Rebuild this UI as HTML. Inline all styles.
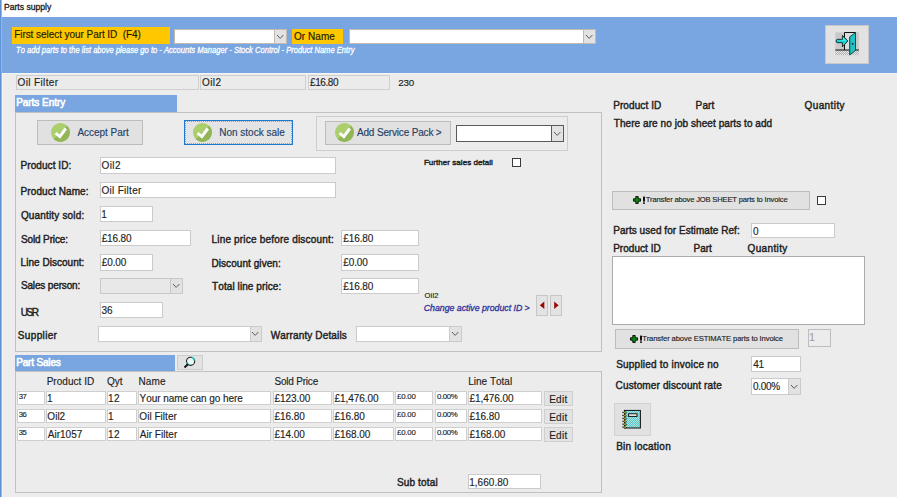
<!DOCTYPE html>
<html><head><meta charset="utf-8"><style>
html,body{margin:0;padding:0;}
body{width:897px;height:497px;overflow:hidden;position:relative;background:#ececec;font-family:'Liberation Sans', sans-serif;}
.a{position:absolute;box-sizing:border-box;}
.t{position:absolute;white-space:nowrap;font-kerning:none;-webkit-text-stroke:0.15px currentColor;}
</style></head><body>
<div class="a" style="left:0px;top:0px;width:897px;height:17px;background:#ffffff;"></div>
<div class="t" style="left:4.00px;top:2.97px;font-size:8.6px;line-height:8.6px;color:#1a1a1a;-webkit-text-stroke:0.3px #1a1a1a;">Parts supply</div>
<div class="a" style="left:0px;top:17px;width:897px;height:56px;background:#79a6e0;"></div>
<div class="a" style="left:0px;top:73px;width:897px;height:1px;background:#f4f4f4;"></div>
<div class="a" style="left:12px;top:27px;width:158px;height:17px;background:#ffc700;"></div>
<div class="t" style="left:14.18px;top:29.65px;font-size:10.01px;line-height:10.01px;color:#201a00;letter-spacing:-0.055px;">First select your Part ID&nbsp; (F4)</div>
<div class="a" style="left:174px;top:29px;width:113px;height:15px;background:#fff;border:1px solid #c2bbb4;"></div>
<div class="a" style="left:274px;top:29px;width:13px;height:15px;background:#e2e2e2;border:1px solid #c2bbb4;"></div>
<svg class="a" style="left:275.7px;top:33.8px" width="8.4" height="5.4"><polyline points="1,1 4.2,4.4 7.4,1" fill="none" stroke="#5c5c5c" stroke-width="1"/></svg>
<div class="a" style="left:292px;top:29px;width:51px;height:15px;background:#ffc700;"></div>
<div class="t" style="left:294.03px;top:31.85px;font-size:10.01px;line-height:10.01px;color:#201a00;letter-spacing:0.053px;">Or Name</div>
<div class="a" style="left:349px;top:29px;width:247px;height:15px;background:#fff;border:1px solid #c2bbb4;"></div>
<div class="a" style="left:583px;top:29px;width:13px;height:15px;background:#e2e2e2;border:1px solid #c2bbb4;"></div>
<svg class="a" style="left:584.6999999999999px;top:33.8px" width="8.4" height="5.4"><polyline points="1,1 4.2,4.4 7.4,1" fill="none" stroke="#5c5c5c" stroke-width="1"/></svg>
<div class="t" style="left:16.00px;top:45.94px;font-size:8.8px;line-height:8.8px;color:#ffffff;font-style:italic;transform:scaleX(0.862);transform-origin:0 0;-webkit-text-stroke:0.3px #fff;">To add parts to the list above please go to - Accounts Manager - Stock Control - Product Name Entry</div>
<div class="a" style="left:825px;top:25px;width:44px;height:39px;background:#e2e2e2;border:1px solid #c8c8c8;"></div>
<svg class="a" style="left:833px;top:30px" width="28" height="28" viewBox="0 0 28 28">
<defs><pattern id="htch" width="2" height="2" patternUnits="userSpaceOnUse"><rect width="2" height="2" fill="#e6e6e6"/><rect width="1" height="1" fill="#b0b0b0"/><rect x="1" y="1" width="1" height="1" fill="#b0b0b0"/></pattern></defs>
<rect x="2.3" y="2.3" width="23.6" height="17.7" fill="#c9c9c9"/>
<rect x="11.5" y="2.5" width="11" height="17.5" fill="#dcdcdc"/>
<rect x="2.3" y="20" width="23.6" height="5.2" fill="url(#htch)"/>
<path d="M11.5 20 V2.5 H22.5" fill="none" stroke="#111" stroke-width="1"/>
<line x1="2.3" y1="20" x2="25.9" y2="20" stroke="#111" stroke-width="1"/>
<path d="M16.5 7 L22.5 2.5 L22.5 20.5 L16.5 25 Z" fill="#1fc4c4" stroke="#0a3a3a" stroke-width="0.9"/>
<path d="M16.5 7 L17.6 6.2 L17.6 24.2 L16.5 25 Z" fill="#0e8f8f"/>
<circle cx="19.7" cy="13.8" r="0.9" fill="#113"/>
<path d="M4.8 9.3 H9.4 V5.4 L14.9 11 L9.4 16.9 V12.7 H4.8 A1.7 1.7 0 0 1 4.8 9.3 Z" fill="#12d6d6" stroke="#102020" stroke-width="0.9"/>
<path d="M5 10 H10 V7.5 L13 11 Z" fill="#7ff0f0" opacity="0.7"/>
</svg>
<div class="a" style="left:16px;top:75px;width:183px;height:15px;background:#ebebeb;border:1px solid #cfcfcf;"></div>
<div class="t" style="left:17.53px;top:78.05px;font-size:10px;line-height:10px;color:#1e1e1e;letter-spacing:0.369px;">Oil Filter</div>
<div class="a" style="left:200px;top:75px;width:106px;height:15px;background:#ebebeb;border:1px solid #cfcfcf;"></div>
<div class="t" style="left:202.03px;top:78.05px;font-size:10px;line-height:10px;color:#1e1e1e;letter-spacing:0.398px;">Oil2</div>
<div class="a" style="left:308px;top:75px;width:82px;height:15px;background:#ebebeb;border:1px solid #cfcfcf;"></div>
<div class="t" style="left:310.02px;top:78.05px;font-size:10px;line-height:10px;color:#1e1e1e;letter-spacing:-0.402px;">£16.80</div>
<div class="t" style="left:398.31px;top:77.68px;font-size:9.8px;line-height:9.8px;color:#1e1e1e;letter-spacing:-0.238px;">230</div>
<div class="a" style="left:15px;top:112px;width:587px;height:240px;border:1px solid #c0c0c0;"></div>
<div class="a" style="left:15px;top:95px;width:162px;height:17px;background:#79a6e0;"></div>
<div class="t" style="left:16.18px;top:98.25px;font-size:10.01px;line-height:10.01px;color:#ffffff;letter-spacing:-0.047px;-webkit-text-stroke:0.6px #fff;">Parts Entry</div>
<div class="a" style="left:37px;top:120px;width:106px;height:25px;background:#e1e1e1;border:1px solid #bdbdbd;"></div>
<svg class="a" style="left:50.9px;top:123.19999999999999px" width="19.0" height="19.0" viewBox="0 0 20 20">
<circle cx="10" cy="10" r="10" fill="#aacf6c"/>
<path d="M17.07 2.93 A10 10 0 0 1 2.93 17.07 Z" fill="#92b556"/>
<polyline points="4.8,10.6 9.3,14.2 15.6,5.8" fill="none" stroke="#fafafa" stroke-width="3.2"/>
</svg>
<div class="t" style="left:77.48px;top:128.35px;font-size:10.01px;line-height:10.01px;color:#253f66;letter-spacing:-0.045px;">Accept Part</div>
<div class="a" style="left:184px;top:120px;width:109px;height:25px;background:#e4e4e4;border:1px solid #1f78d0;"></div>
<div class="a" style="left:185px;top:121px;width:107px;height:23px;border:1px dotted #c89a6a;"></div>
<svg class="a" style="left:193.0px;top:123.19999999999999px" width="19.0" height="19.0" viewBox="0 0 20 20">
<circle cx="10" cy="10" r="10" fill="#aacf6c"/>
<path d="M17.07 2.93 A10 10 0 0 1 2.93 17.07 Z" fill="#92b556"/>
<polyline points="4.8,10.6 9.3,14.2 15.6,5.8" fill="none" stroke="#fafafa" stroke-width="3.2"/>
</svg>
<div class="t" style="left:219.18px;top:128.35px;font-size:10.01px;line-height:10.01px;color:#253f66;letter-spacing:0.001px;">Non stock sale</div>
<div class="a" style="left:316px;top:116px;width:252px;height:35px;border:1px solid #cdcdcd;"></div>
<div class="a" style="left:325px;top:121px;width:126px;height:24px;background:#e1e1e1;border:1px solid #bdbdbd;"></div>
<svg class="a" style="left:334.8px;top:123.19999999999999px" width="19.0" height="19.0" viewBox="0 0 20 20">
<circle cx="10" cy="10" r="10" fill="#aacf6c"/>
<path d="M17.07 2.93 A10 10 0 0 1 2.93 17.07 Z" fill="#92b556"/>
<polyline points="4.8,10.6 9.3,14.2 15.6,5.8" fill="none" stroke="#fafafa" stroke-width="3.2"/>
</svg>
<div class="t" style="left:356.98px;top:128.35px;font-size:10.01px;line-height:10.01px;color:#253f66;letter-spacing:-0.166px;">Add Service Pack &gt;</div>
<div class="a" style="left:456px;top:125px;width:108px;height:17px;background:#fff;border:1px solid #5a5a5a;"></div>
<div class="a" style="left:551px;top:125px;width:13px;height:17px;background:#e2e2e2;border:1px solid #5a5a5a;"></div>
<svg class="a" style="left:552.6999999999999px;top:130.8px" width="8.4" height="5.4"><polyline points="1,1 4.2,4.4 7.4,1" fill="none" stroke="#5c5c5c" stroke-width="1"/></svg>
<div class="t" style="left:423.94px;top:159.16px;font-size:8px;line-height:8px;color:#1e1e1e;letter-spacing:0.045px;-webkit-text-stroke:0.42px currentColor;">Further sales detail</div>
<div class="a" style="left:512px;top:158px;width:9px;height:9px;background:#fff;border:1px solid #3a3a3a;"></div>
<div class="t" style="left:20.58px;top:161.05px;font-size:10.01px;line-height:10.01px;color:#1e1e1e;letter-spacing:0.067px;-webkit-text-stroke:0.42px currentColor;">Product ID:</div>
<div class="a" style="left:100px;top:157px;width:236px;height:17px;background:#fff;border:1px solid #cbcbcb;"></div>
<div class="t" style="left:101.53px;top:161.25px;font-size:10.01px;line-height:10.01px;color:#1e1e1e;letter-spacing:0.426px;">Oil2</div>
<div class="t" style="left:20.58px;top:187.35px;font-size:10.01px;line-height:10.01px;color:#1e1e1e;letter-spacing:0.105px;-webkit-text-stroke:0.42px currentColor;">Product Name:</div>
<div class="a" style="left:100px;top:182px;width:236px;height:16px;background:#fff;border:1px solid #cbcbcb;"></div>
<div class="t" style="left:101.53px;top:186.25px;font-size:10.01px;line-height:10.01px;color:#1e1e1e;letter-spacing:0.287px;">Oil Filter</div>
<div class="t" style="left:20.93px;top:210.75px;font-size:10.01px;line-height:10.01px;color:#1e1e1e;letter-spacing:0.162px;-webkit-text-stroke:0.42px currentColor;">Quantity sold:</div>
<div class="a" style="left:100px;top:206px;width:53px;height:16px;background:#fff;border:1px solid #cbcbcb;"></div>
<div class="t" style="left:101.24px;top:210.25px;font-size:10.01px;line-height:10.01px;color:#1e1e1e;letter-spacing:0px;">1</div>
<div class="t" style="left:20.95px;top:234.75px;font-size:10.01px;line-height:10.01px;color:#1e1e1e;letter-spacing:-0.128px;-webkit-text-stroke:0.42px currentColor;">Sold Price:</div>
<div class="a" style="left:100px;top:230px;width:91px;height:16px;background:#fff;border:1px solid #cbcbcb;"></div>
<div class="t" style="left:101.72px;top:234.25px;font-size:10.01px;line-height:10.01px;color:#1e1e1e;letter-spacing:-0.168px;">£16.80</div>
<div class="t" style="left:211.48px;top:234.75px;font-size:10.01px;line-height:10.01px;color:#1e1e1e;letter-spacing:0.189px;-webkit-text-stroke:0.42px currentColor;">Line price before discount:</div>
<div class="a" style="left:341px;top:230px;width:78px;height:16px;background:#fff;border:1px solid #cbcbcb;"></div>
<div class="t" style="left:343.22px;top:234.25px;font-size:10.01px;line-height:10.01px;color:#1e1e1e;letter-spacing:-0.077px;">£16.80</div>
<div class="t" style="left:20.58px;top:257.85px;font-size:10.01px;line-height:10.01px;color:#1e1e1e;letter-spacing:0.031px;-webkit-text-stroke:0.42px currentColor;">Line Discount:</div>
<div class="a" style="left:100px;top:254px;width:53px;height:17px;background:#fff;border:1px solid #cbcbcb;"></div>
<div class="t" style="left:101.72px;top:258.25px;font-size:10.01px;line-height:10.01px;color:#1e1e1e;letter-spacing:-0.098px;">£0.00</div>
<div class="t" style="left:211.48px;top:258.75px;font-size:10.01px;line-height:10.01px;color:#1e1e1e;letter-spacing:0.066px;-webkit-text-stroke:0.42px currentColor;">Discount given:</div>
<div class="a" style="left:341px;top:254px;width:78px;height:17px;background:#fff;border:1px solid #cbcbcb;"></div>
<div class="t" style="left:343.22px;top:258.25px;font-size:10.01px;line-height:10.01px;color:#1e1e1e;letter-spacing:-0.098px;">£0.00</div>
<div class="t" style="left:20.95px;top:281.25px;font-size:10.01px;line-height:10.01px;color:#1e1e1e;letter-spacing:-0.152px;-webkit-text-stroke:0.42px currentColor;">Sales person:</div>
<div class="a" style="left:100px;top:278px;width:83px;height:16px;background:#e8e8e8;border:1px solid #c8c8c8;"></div>
<div class="a" style="left:170px;top:278px;width:13px;height:16px;background:#e2e2e2;border:1px solid #c8c8c8;"></div>
<svg class="a" style="left:171.70000000000002px;top:283.3px" width="8.4" height="5.4"><polyline points="1,1 4.2,4.4 7.4,1" fill="none" stroke="#5c5c5c" stroke-width="1"/></svg>
<div class="t" style="left:212.08px;top:282.25px;font-size:10.01px;line-height:10.01px;color:#1e1e1e;letter-spacing:0.085px;-webkit-text-stroke:0.42px currentColor;">Total line price:</div>
<div class="a" style="left:341px;top:278px;width:78px;height:16px;background:#fff;border:1px solid #cbcbcb;"></div>
<div class="t" style="left:343.22px;top:282.25px;font-size:10.01px;line-height:10.01px;color:#1e1e1e;letter-spacing:-0.077px;">£16.80</div>
<div class="t" style="left:424.44px;top:292.02px;font-size:7.6px;line-height:7.6px;color:#1e1e1e;letter-spacing:0.209px;">Oil2</div>
<div class="t" style="left:423.81px;top:304.24px;font-size:8.8px;line-height:8.8px;color:#30309a;font-style:italic;letter-spacing:-0.036px;-webkit-text-stroke:0.3px #30309a;">Change active product ID &gt;</div>
<div class="a" style="left:536px;top:295px;width:12px;height:21px;background:#e3e3e3;border:1px solid #c6c6c6;"></div>
<div class="a" style="left:550px;top:295px;width:12px;height:21px;background:#e3e3e3;border:1px solid #c6c6c6;"></div>
<svg class="a" style="left:536px;top:295px" width="26" height="20"><polygon points="8.3,6.6 8.3,14 3.8,10.3" fill="#980808"/><polygon points="18.2,6.6 18.2,14 22.6,10.3" fill="#980808"/></svg>
<div class="t" style="left:20.63px;top:307.55px;font-size:10.01px;line-height:10.01px;color:#1e1e1e;letter-spacing:-1.407px;-webkit-text-stroke:0.42px currentColor;">USR</div>
<div class="a" style="left:100px;top:302px;width:63px;height:16px;background:#fff;border:1px solid #cbcbcb;"></div>
<div class="t" style="left:101.62px;top:306.25px;font-size:10.01px;line-height:10.01px;color:#1e1e1e;letter-spacing:-0.159px;">36</div>
<div class="t" style="left:17.85px;top:331.25px;font-size:10.01px;line-height:10.01px;color:#1e1e1e;letter-spacing:0.342px;-webkit-text-stroke:0.42px currentColor;">Supplier</div>
<div class="a" style="left:98px;top:326px;width:164px;height:16px;background:#fff;border:1px solid #cbcbcb;"></div>
<div class="a" style="left:250px;top:326px;width:12px;height:16px;background:#e2e2e2;border:1px solid #cbcbcb;"></div>
<svg class="a" style="left:251.20000000000002px;top:331.3px" width="8.4" height="5.4"><polyline points="1,1 4.2,4.4 7.4,1" fill="none" stroke="#5c5c5c" stroke-width="1"/></svg>
<div class="t" style="left:270.76px;top:330.75px;font-size:10.01px;line-height:10.01px;color:#1e1e1e;letter-spacing:0.142px;-webkit-text-stroke:0.42px currentColor;">Warranty Details</div>
<div class="a" style="left:356px;top:326px;width:106px;height:16px;background:#fff;border:1px solid #cbcbcb;"></div>
<div class="a" style="left:449px;top:326px;width:13px;height:16px;background:#e2e2e2;border:1px solid #cbcbcb;"></div>
<svg class="a" style="left:450.7px;top:331.3px" width="8.4" height="5.4"><polyline points="1,1 4.2,4.4 7.4,1" fill="none" stroke="#5c5c5c" stroke-width="1"/></svg>
<div class="a" style="left:15px;top:371px;width:587px;height:122px;border:1px solid #c0c0c0;"></div>
<div class="a" style="left:15px;top:355px;width:160px;height:16px;background:#79a6e0;"></div>
<div class="t" style="left:16.18px;top:358.25px;font-size:10.01px;line-height:10.01px;color:#ffffff;letter-spacing:-0.166px;-webkit-text-stroke:0.6px #fff;">Part Sales</div>
<div class="a" style="left:177px;top:355px;width:26px;height:15px;background:#e2e2e2;border:1px solid #cccccc;"></div>
<svg class="a" style="left:182px;top:356px" width="16" height="14"><circle cx="8.6" cy="5.3" r="4.1" fill="#eef6f6" stroke="#222" stroke-width="1.1"/><path d="M9.8 1.6 A3.6 3.6 0 0 1 12.2 4.6" fill="none" stroke="#20d8c8" stroke-width="1.6"/><path d="M5 6.2 A3.6 3.6 0 0 0 7 8.8" fill="none" stroke="#20d8c8" stroke-width="1.4"/><line x1="6.2" y1="8.1" x2="2.5" y2="11.6" stroke="#111" stroke-width="2"/></svg>
<div class="t" style="left:46.68px;top:377.35px;font-size:10.01px;line-height:10.01px;color:#1e1e1e;letter-spacing:0.027px;">Product ID</div>
<div class="t" style="left:107.03px;top:377.35px;font-size:10.01px;line-height:10.01px;color:#1e1e1e;letter-spacing:0.023px;">Qyt</div>
<div class="t" style="left:138.58px;top:377.35px;font-size:10.01px;line-height:10.01px;color:#1e1e1e;letter-spacing:0.069px;">Name</div>
<div class="t" style="left:274.55px;top:377.35px;font-size:10.01px;line-height:10.01px;color:#1e1e1e;letter-spacing:-0.213px;">Sold Price</div>
<div class="t" style="left:468.18px;top:377.35px;font-size:10.01px;line-height:10.01px;color:#1e1e1e;letter-spacing:0.004px;">Line Total</div>
<div class="a" style="left:17px;top:391px;width:28px;height:14px;background:#fff;border:1px solid #cfcfcf;"></div>
<div class="t" style="left:18.71px;top:392.61px;font-size:7.7px;line-height:7.7px;color:#1e1e1e;letter-spacing:-0.367px;">37</div>
<div class="a" style="left:46px;top:391px;width:60px;height:14px;background:#fff;border:1px solid #cfcfcf;"></div>
<div class="t" style="left:47.04px;top:394.45px;font-size:10.01px;line-height:10.01px;color:#1e1e1e;letter-spacing:0px;">1</div>
<div class="a" style="left:107px;top:391px;width:30px;height:14px;background:#fff;border:1px solid #cfcfcf;"></div>
<div class="t" style="left:108.04px;top:394.45px;font-size:10.01px;line-height:10.01px;color:#1e1e1e;letter-spacing:0.286px;">12</div>
<div class="a" style="left:138px;top:391px;width:133px;height:14px;background:#fff;border:1px solid #cfcfcf;"></div>
<div class="t" style="left:139.58px;top:394.45px;font-size:10.01px;line-height:10.01px;color:#1e1e1e;letter-spacing:-0.068px;">Your name can go here</div>
<div class="a" style="left:273px;top:391px;width:59px;height:14px;background:#fff;border:1px solid #cfcfcf;"></div>
<div class="t" style="left:274.52px;top:394.45px;font-size:10.01px;line-height:10.01px;color:#1e1e1e;letter-spacing:-0.062px;">£123.00</div>
<div class="a" style="left:333px;top:391px;width:61px;height:14px;background:#fff;border:1px solid #cfcfcf;"></div>
<div class="t" style="left:334.52px;top:394.45px;font-size:10.01px;line-height:10.01px;color:#1e1e1e;letter-spacing:-0.049px;">£1,476.00</div>
<div class="a" style="left:395px;top:391px;width:38px;height:14px;background:#fff;border:1px solid #cfcfcf;"></div>
<div class="t" style="left:396.98px;top:392.99px;font-size:7.8px;line-height:7.8px;color:#1e1e1e;letter-spacing:-0.172px;">£0.00</div>
<div class="a" style="left:435px;top:391px;width:32px;height:14px;background:#fff;border:1px solid #cfcfcf;"></div>
<div class="t" style="left:436.90px;top:392.99px;font-size:7.8px;line-height:7.8px;color:#1e1e1e;letter-spacing:-0.346px;">0.00%</div>
<div class="a" style="left:468px;top:391px;width:74px;height:14px;background:#fff;border:1px solid #cfcfcf;"></div>
<div class="t" style="left:469.52px;top:394.45px;font-size:10.01px;line-height:10.01px;color:#1e1e1e;letter-spacing:-0.049px;">£1,476.00</div>
<div class="a" style="left:544px;top:391px;width:29px;height:14.5px;background:#e3e3e3;border:1px solid #cfcfcf;"></div>
<div class="t" style="left:549.18px;top:394.55px;font-size:10.01px;line-height:10.01px;color:#1e1e1e;letter-spacing:0.282px;">Edit</div>
<div class="a" style="left:17px;top:409px;width:28px;height:14px;background:#fff;border:1px solid #cfcfcf;"></div>
<div class="t" style="left:18.71px;top:410.61px;font-size:7.7px;line-height:7.7px;color:#1e1e1e;letter-spacing:-0.416px;">36</div>
<div class="a" style="left:46px;top:409px;width:60px;height:14px;background:#fff;border:1px solid #cfcfcf;"></div>
<div class="t" style="left:47.33px;top:412.45px;font-size:10.01px;line-height:10.01px;color:#1e1e1e;letter-spacing:0.025px;">Oil2</div>
<div class="a" style="left:107px;top:409px;width:30px;height:14px;background:#fff;border:1px solid #cfcfcf;"></div>
<div class="t" style="left:108.04px;top:412.45px;font-size:10.01px;line-height:10.01px;color:#1e1e1e;letter-spacing:0px;">1</div>
<div class="a" style="left:138px;top:409px;width:133px;height:14px;background:#fff;border:1px solid #cfcfcf;"></div>
<div class="t" style="left:139.33px;top:412.45px;font-size:10.01px;line-height:10.01px;color:#1e1e1e;letter-spacing:0.031px;">Oil Filter</div>
<div class="a" style="left:273px;top:409px;width:59px;height:14px;background:#fff;border:1px solid #cfcfcf;"></div>
<div class="t" style="left:274.52px;top:412.45px;font-size:10.01px;line-height:10.01px;color:#1e1e1e;letter-spacing:-0.077px;">£16.80</div>
<div class="a" style="left:333px;top:409px;width:61px;height:14px;background:#fff;border:1px solid #cfcfcf;"></div>
<div class="t" style="left:334.52px;top:412.45px;font-size:10.01px;line-height:10.01px;color:#1e1e1e;letter-spacing:-0.077px;">£16.80</div>
<div class="a" style="left:395px;top:409px;width:38px;height:14px;background:#fff;border:1px solid #cfcfcf;"></div>
<div class="t" style="left:396.98px;top:410.99px;font-size:7.8px;line-height:7.8px;color:#1e1e1e;letter-spacing:-0.172px;">£0.00</div>
<div class="a" style="left:435px;top:409px;width:32px;height:14px;background:#fff;border:1px solid #cfcfcf;"></div>
<div class="t" style="left:436.90px;top:410.99px;font-size:7.8px;line-height:7.8px;color:#1e1e1e;letter-spacing:-0.346px;">0.00%</div>
<div class="a" style="left:468px;top:409px;width:74px;height:14px;background:#fff;border:1px solid #cfcfcf;"></div>
<div class="t" style="left:469.52px;top:412.45px;font-size:10.01px;line-height:10.01px;color:#1e1e1e;letter-spacing:-0.077px;">£16.80</div>
<div class="a" style="left:544px;top:409px;width:29px;height:14.5px;background:#e3e3e3;border:1px solid #cfcfcf;"></div>
<div class="t" style="left:549.18px;top:412.55px;font-size:10.01px;line-height:10.01px;color:#1e1e1e;letter-spacing:0.282px;">Edit</div>
<div class="a" style="left:17px;top:427px;width:28px;height:14px;background:#fff;border:1px solid #cfcfcf;"></div>
<div class="t" style="left:18.71px;top:428.61px;font-size:7.7px;line-height:7.7px;color:#1e1e1e;letter-spacing:-0.431px;">35</div>
<div class="a" style="left:46px;top:427px;width:60px;height:14px;background:#fff;border:1px solid #cfcfcf;"></div>
<div class="t" style="left:47.78px;top:430.45px;font-size:10.01px;line-height:10.01px;color:#1e1e1e;letter-spacing:0.009px;">Air1057</div>
<div class="a" style="left:107px;top:427px;width:30px;height:14px;background:#fff;border:1px solid #cfcfcf;"></div>
<div class="t" style="left:108.04px;top:430.45px;font-size:10.01px;line-height:10.01px;color:#1e1e1e;letter-spacing:0.286px;">12</div>
<div class="a" style="left:138px;top:427px;width:133px;height:14px;background:#fff;border:1px solid #cfcfcf;"></div>
<div class="t" style="left:139.78px;top:430.45px;font-size:10.01px;line-height:10.01px;color:#1e1e1e;letter-spacing:0.025px;">Air Filter</div>
<div class="a" style="left:273px;top:427px;width:59px;height:14px;background:#fff;border:1px solid #cfcfcf;"></div>
<div class="t" style="left:274.52px;top:430.45px;font-size:10.01px;line-height:10.01px;color:#1e1e1e;letter-spacing:-0.077px;">£14.00</div>
<div class="a" style="left:333px;top:427px;width:61px;height:14px;background:#fff;border:1px solid #cfcfcf;"></div>
<div class="t" style="left:334.52px;top:430.45px;font-size:10.01px;line-height:10.01px;color:#1e1e1e;letter-spacing:-0.062px;">£168.00</div>
<div class="a" style="left:395px;top:427px;width:38px;height:14px;background:#fff;border:1px solid #cfcfcf;"></div>
<div class="t" style="left:396.98px;top:428.99px;font-size:7.8px;line-height:7.8px;color:#1e1e1e;letter-spacing:-0.172px;">£0.00</div>
<div class="a" style="left:435px;top:427px;width:32px;height:14px;background:#fff;border:1px solid #cfcfcf;"></div>
<div class="t" style="left:436.90px;top:428.99px;font-size:7.8px;line-height:7.8px;color:#1e1e1e;letter-spacing:-0.346px;">0.00%</div>
<div class="a" style="left:468px;top:427px;width:74px;height:14px;background:#fff;border:1px solid #cfcfcf;"></div>
<div class="t" style="left:469.52px;top:430.45px;font-size:10.01px;line-height:10.01px;color:#1e1e1e;letter-spacing:-0.062px;">£168.00</div>
<div class="a" style="left:544px;top:427px;width:29px;height:14.5px;background:#e3e3e3;border:1px solid #cfcfcf;"></div>
<div class="t" style="left:549.18px;top:430.55px;font-size:10.01px;line-height:10.01px;color:#1e1e1e;letter-spacing:0.282px;">Edit</div>
<div class="t" style="left:396.95px;top:478.05px;font-size:10.01px;line-height:10.01px;color:#1e1e1e;letter-spacing:0.152px;-webkit-text-stroke:0.42px currentColor;">Sub total</div>
<div class="a" style="left:468px;top:474px;width:73px;height:15px;background:#fff;border:1px solid #cbcbcb;"></div>
<div class="t" style="left:469.24px;top:478.25px;font-size:10.01px;line-height:10.01px;color:#1e1e1e;letter-spacing:0.025px;">1,660.80</div>
<div class="t" style="left:613.18px;top:100.95px;font-size:10.01px;line-height:10.01px;color:#1e1e1e;letter-spacing:0.09px;-webkit-text-stroke:0.42px currentColor;">Product ID</div>
<div class="t" style="left:695.58px;top:100.95px;font-size:10.01px;line-height:10.01px;color:#1e1e1e;letter-spacing:0.145px;-webkit-text-stroke:0.42px currentColor;">Part</div>
<div class="t" style="left:804.53px;top:100.95px;font-size:10.01px;line-height:10.01px;color:#1e1e1e;letter-spacing:0.402px;-webkit-text-stroke:0.42px currentColor;">Quantity</div>
<div class="t" style="left:613.78px;top:119.25px;font-size:10.01px;line-height:10.01px;color:#1e1e1e;letter-spacing:0.065px;-webkit-text-stroke:0.42px currentColor;">There are no job sheet parts to add</div>
<div class="a" style="left:612px;top:191px;width:198px;height:19px;background:#e1e1e1;border:1px solid #bdbdbd;"></div>
<svg class="a" style="left:632.5px;top:195.5px" width="13" height="8"><path d="M2.8 0.5h2.4v2.3h2.3v2.4H5.2v2.3H2.8V5.2H0.5V2.8h2.3z" fill="#0a900a" stroke="#000" stroke-width="0.9"/><rect x="10" y="0.6" width="2" height="5" fill="#111"/><rect x="10" y="6.4" width="2" height="1.4" fill="#111"/></svg>
<div class="t" style="left:645.63px;top:196.42px;font-size:7.6px;line-height:7.6px;color:#1e1e1e;letter-spacing:-0.175px;">Transfer above JOB SHEET parts to Invoice</div>
<div class="a" style="left:817px;top:196px;width:9px;height:9px;background:#fff;border:1px solid #3a3a3a;"></div>
<div class="t" style="left:613.18px;top:225.95px;font-size:10.01px;line-height:10.01px;color:#1e1e1e;letter-spacing:0.054px;-webkit-text-stroke:0.42px currentColor;">Parts used for Estimate Ref:</div>
<div class="a" style="left:751px;top:223px;width:84px;height:15px;background:#fff;border:1px solid #cbcbcb;"></div>
<div class="t" style="left:753.11px;top:227.25px;font-size:10.01px;line-height:10.01px;color:#1e1e1e;letter-spacing:0px;">0</div>
<div class="t" style="left:613.18px;top:243.95px;font-size:10.01px;line-height:10.01px;color:#1e1e1e;letter-spacing:0.027px;-webkit-text-stroke:0.42px currentColor;">Product ID</div>
<div class="t" style="left:693.48px;top:243.95px;font-size:10.01px;line-height:10.01px;color:#1e1e1e;letter-spacing:0.005px;-webkit-text-stroke:0.42px currentColor;">Part</div>
<div class="t" style="left:747.53px;top:243.95px;font-size:10.01px;line-height:10.01px;color:#1e1e1e;letter-spacing:0.359px;-webkit-text-stroke:0.42px currentColor;">Quantity</div>
<div class="a" style="left:612px;top:256px;width:253px;height:69px;background:#fff;border:1px solid #ababab;"></div>
<div class="a" style="left:615px;top:329px;width:184px;height:20px;background:#e1e1e1;border:1px solid #bdbdbd;"></div>
<svg class="a" style="left:629.5px;top:334.5px" width="13" height="8"><path d="M2.8 0.5h2.4v2.3h2.3v2.4H5.2v2.3H2.8V5.2H0.5V2.8h2.3z" fill="#0a900a" stroke="#000" stroke-width="0.9"/><rect x="10" y="0.6" width="2" height="5" fill="#111"/><rect x="10" y="6.4" width="2" height="1.4" fill="#111"/></svg>
<div class="t" style="left:642.13px;top:335.42px;font-size:7.6px;line-height:7.6px;color:#1e1e1e;letter-spacing:-0.099px;">Transfer above ESTIMATE parts to Invoice</div>
<div class="a" style="left:808px;top:329px;width:23px;height:18px;background:#ececec;border:1px solid #bdbdbd;"></div>
<div class="t" style="left:809.24px;top:333.25px;font-size:10.01px;line-height:10.01px;color:#a0a0a0;letter-spacing:0px;">1</div>
<div class="t" style="left:616.15px;top:359.95px;font-size:10.01px;line-height:10.01px;color:#1e1e1e;letter-spacing:0.22px;-webkit-text-stroke:0.42px currentColor;">Supplied to invoice no</div>
<div class="a" style="left:751px;top:356px;width:50px;height:16px;background:#fff;border:1px solid #cbcbcb;"></div>
<div class="t" style="left:753.27px;top:360.25px;font-size:10.01px;line-height:10.01px;color:#1e1e1e;letter-spacing:-0.262px;">41</div>
<div class="t" style="left:615.59px;top:380.85px;font-size:10.01px;line-height:10.01px;color:#1e1e1e;letter-spacing:0.132px;-webkit-text-stroke:0.42px currentColor;">Customer discount rate</div>
<div class="a" style="left:751px;top:378px;width:50px;height:17px;background:#fff;border:1px solid #cbcbcb;"></div>
<div class="a" style="left:788px;top:378px;width:13px;height:17px;background:#e2e2e2;border:1px solid #cbcbcb;"></div>
<svg class="a" style="left:789.6999999999999px;top:383.8px" width="8.4" height="5.4"><polyline points="1,1 4.2,4.4 7.4,1" fill="none" stroke="#5c5c5c" stroke-width="1"/></svg>
<div class="t" style="left:753.11px;top:382.25px;font-size:10.01px;line-height:10.01px;color:#1e1e1e;letter-spacing:-0.317px;">0.00%</div>
<div class="a" style="left:614px;top:403px;width:37px;height:33px;background:#e1e1e1;border:1px solid #d2d2d2;"></div>
<svg class="a" style="left:620px;top:406px" width="24" height="26" viewBox="0 0 24 26">
<defs><pattern id="tq" width="2" height="2" patternUnits="userSpaceOnUse"><rect width="2" height="2" fill="#5ec6c6"/><rect width="1" height="1" fill="#a8e2e2"/><rect x="1" y="1" width="1" height="1" fill="#a8e2e2"/></pattern></defs>
<rect x="4.4" y="4.4" width="16" height="17.6" fill="url(#tq)" stroke="#111" stroke-width="1"/>
<rect x="4" y="4" width="1.6" height="18.4" fill="#111"/>
<rect x="8.6" y="7.8" width="8.4" height="2.6" fill="#fafafa" stroke="#111" stroke-width="1"/>
<line x1="2.2" y1="6.3" x2="6.8" y2="6.9" stroke="#222" stroke-width="1"/><rect x="3.6" y="5.6" width="2.4" height="1.6" fill="#9a9a20"/><line x1="2.2" y1="9.4" x2="6.8" y2="10.0" stroke="#222" stroke-width="1"/><rect x="3.6" y="8.7" width="2.4" height="1.6" fill="#9a9a20"/><line x1="2.2" y1="12.3" x2="6.8" y2="12.9" stroke="#222" stroke-width="1"/><rect x="3.6" y="11.6" width="2.4" height="1.6" fill="#9a9a20"/><line x1="2.2" y1="15.2" x2="6.8" y2="15.8" stroke="#222" stroke-width="1"/><rect x="3.6" y="14.5" width="2.4" height="1.6" fill="#9a9a20"/><line x1="2.2" y1="18.1" x2="6.8" y2="18.7" stroke="#222" stroke-width="1"/><rect x="3.6" y="17.4" width="2.4" height="1.6" fill="#9a9a20"/><line x1="2.2" y1="21.0" x2="6.8" y2="21.6" stroke="#222" stroke-width="1"/><rect x="3.6" y="20.3" width="2.4" height="1.6" fill="#9a9a20"/>
</svg>
<div class="t" style="left:616.18px;top:442.25px;font-size:10.01px;line-height:10.01px;color:#1e1e1e;letter-spacing:0.256px;-webkit-text-stroke:0.42px currentColor;">Bin location</div>
<div class="a" style="left:0;top:0;width:1px;height:497px;background:#6093d6"></div><div class="a" style="left:1px;top:0;width:1px;height:497px;background:#8cb9ee"></div><div class="a" style="left:2px;top:74px;width:1px;height:423px;background:#f5f5f5"></div>
</body></html>
